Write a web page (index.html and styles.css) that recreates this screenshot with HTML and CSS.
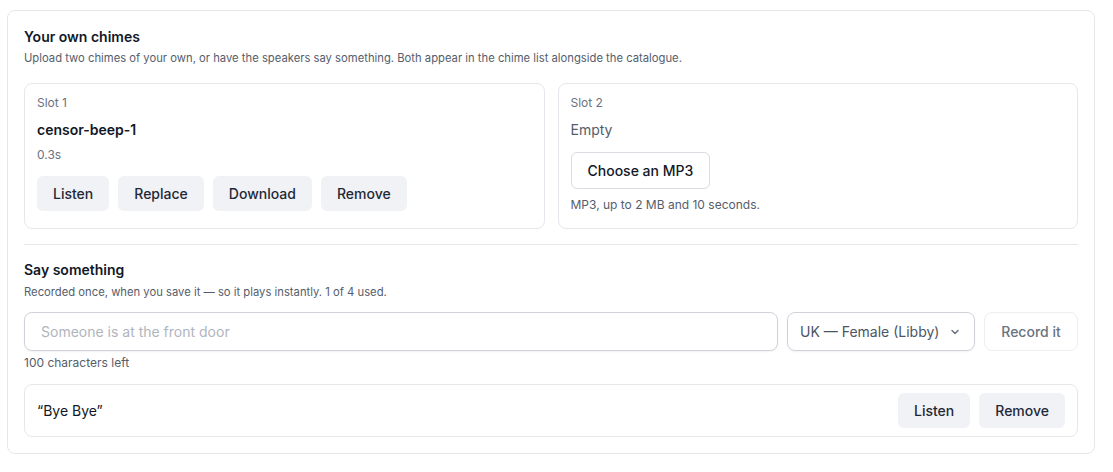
FILE: index.html
```html
<!DOCTYPE html>
<html lang="en">
<head>
    <meta charset="utf-8">
    <link rel="stylesheet" href="styles.css">
    <title>Your own chimes</title>
</head>
<body>
<div class="panel">
    <h3 class="panel-title">Your own chimes</h3>
    <p class="panel-sub">Upload two chimes of your own, or have the speakers say something. Both appear in the chime list alongside the catalogue.</p>

    <div class="slots">
        <div class="slot">
            <div class="slot-label">Slot 1</div>
            <div class="slot-name">censor-beep-1</div>
            <div class="slot-meta">0.3s</div>
            <div class="btn-row">
                <button class="btn">Listen</button>
                <button class="btn">Replace</button>
                <button class="btn">Download</button>
                <button class="btn">Remove</button>
            </div>
        </div>
        <div class="slot">
            <div class="slot-label">Slot 2</div>
            <div class="slot-empty">Empty</div>
            <button class="btn-outline">Choose an MP3</button>
            <div class="slot-hint">MP3, up to 2 MB and 10 seconds.</div>
        </div>
    </div>

    <hr class="divider">

    <h3 class="panel-title">Say something</h3>
    <p class="panel-sub say-sub">Recorded once, when you save it — so it plays instantly. 1 of 4 used.</p>

    <div class="say-row">
        <input class="say-input" type="text" placeholder="Someone is at the front door">
        <div class="voice-select">
            <span>UK — Female (Libby)</span>
            <svg width="12" height="12" viewBox="0 0 12 12"><path d="M3 4.5 6 7.5 9 4.5" fill="none" stroke="#6b7280" stroke-width="1.5" stroke-linecap="round" stroke-linejoin="round"/></svg>
        </div>
        <button class="btn-record" disabled>Record it</button>
    </div>
    <div class="chars-left">100 characters left</div>

    <div class="phrase">
        <span class="phrase-text">“Bye Bye”</span>
        <div class="btn-row">
            <button class="btn">Listen</button>
            <button class="btn">Remove</button>
        </div>
    </div>
</div>
</body>
</html>
```

FILE: styles.css
```css
body {
  margin: 0;
  background-color: #ffffff;
  font-family: Inter, "Liberation Sans", sans-serif;
  color: #111827;
}

.panel {
  margin: 10px 18px 0 7px;
  padding: 16px;
  border: 1px solid #e5e7eb;
  border-radius: 8px;
}

.panel-title {
  margin: 0;
  font-size: 14px;
  line-height: 20px;
  font-weight: 600;
  color: #111827;
}

.panel-sub {
  margin: 3px 0 0;
  font-size: 11.25px;
  line-height: 16px;
  color: #555d6b;
}

.say-sub {
  margin-top: 4px;
}

.slots {
  display: flex;
  gap: 13px;
  margin-top: 17px;
}

.slot {
  flex: 1;
  padding: 11px 12px 15px;
  border: 1px solid #e5e7eb;
  border-radius: 8px;
}

.slot-label {
  font-size: 12px;
  line-height: 16px;
  color: #6b7280;
}

.slot-name {
  margin-top: 9px;
  font-size: 14px;
  line-height: 20px;
  font-weight: 600;
}

.slot-meta {
  margin-top: 7px;
  font-size: 12px;
  line-height: 16px;
  color: #6b7280;
}

.slot-empty {
  margin-top: 9px;
  font-size: 14px;
  line-height: 20px;
  color: #555d6b;
}

.slot-hint {
  margin-top: 8px;
  font-size: 12px;
  line-height: 16px;
  color: #555d6b;
}

.btn-row {
  display: flex;
  gap: 9px;
}

.slot .btn-row {
  margin-top: 13px;
}

.btn {
  height: 35px;
  padding: 0 16px;
  border: none;
  border-radius: 6px;
  background-color: #f1f2f5;
  font-family: inherit;
  font-size: 14px;
  font-weight: 500;
  color: #1f2937;
}

.btn-outline {
  display: block;
  margin-top: 12px;
  height: 37px;
  padding: 0 16px;
  border: 1px solid #d9dce1;
  border-radius: 6px;
  background-color: #ffffff;
  font-family: inherit;
  font-size: 14px;
  font-weight: 500;
  color: #111827;
}

.divider {
  margin: 15px 0 15px;
  border: none;
  border-top: 1px solid #e5e7eb;
}

.say-row {
  display: flex;
  gap: 9px;
  margin-top: 12px;
}

.say-input {
  flex: 1;
  height: 39px;
  box-sizing: border-box;
  padding: 0 16px;
  border: 1px solid #cfd3d9;
  border-radius: 8px;
  font-family: inherit;
  font-size: 14px;
  color: #111827;
  box-shadow: 0 1px 2px rgba(0, 0, 0, 0.05);
}

.say-input::placeholder {
  color: #b0b5bd;
}

.voice-select {
  display: flex;
  align-items: center;
  justify-content: space-between;
  width: 188px;
  height: 39px;
  box-sizing: border-box;
  padding: 0 13px 0 12px;
  border: 1px solid #cfd3d9;
  border-radius: 8px;
  font-size: 14px;
  color: #4b5563;
  box-shadow: 0 1px 2px rgba(0, 0, 0, 0.05);
}

.btn-record {
  width: 94px;
  height: 39px;
  border: 1px solid #eceef1;
  border-radius: 8px;
  background-color: #ffffff;
  font-family: inherit;
  font-size: 14px;
  font-weight: 500;
  color: #6b7280;
}

.chars-left {
  margin-top: 4px;
  font-size: 12px;
  line-height: 16px;
  color: #555d6b;
}

.phrase {
  display: flex;
  align-items: center;
  justify-content: space-between;
  margin-top: 13px;
  padding: 8px 12px;
  border: 1px solid #e5e7eb;
  border-radius: 8px;
}

.phrase-text {
  font-size: 14px;
  color: #111827;
}
```
